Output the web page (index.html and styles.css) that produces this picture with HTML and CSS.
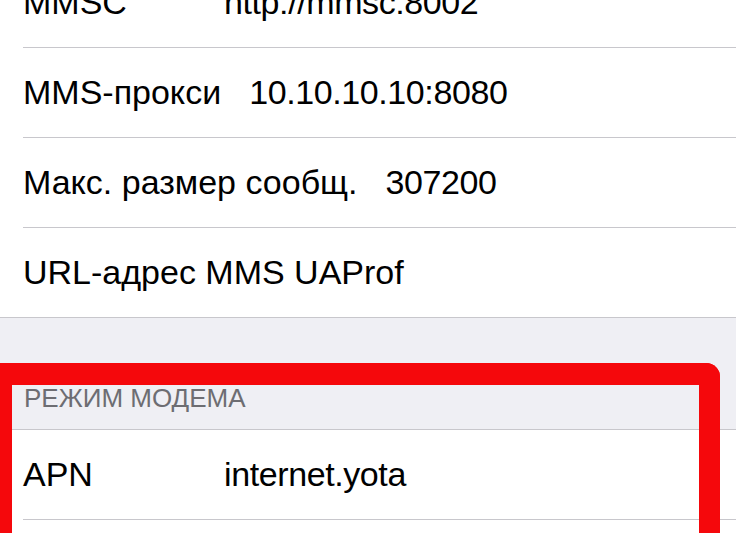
FILE: index.html
```html
<!DOCTYPE html>
<html lang="ru">
<head>
<meta charset="utf-8">
<title>Сотовая сеть передачи данных</title>
<link rel="stylesheet" href="styles.css">
</head>
<body>
<div class="screen">
  <div class="group group-first">
    <div class="cell"><div class="cell-inner"><span class="label">MMSC</span><span class="value">http://mmsc:8002</span></div></div>
    <div class="cell"><div class="cell-inner"><span class="label">MMS-прокси</span><span class="value">10.10.10.10:8080</span></div></div>
    <div class="cell"><div class="cell-inner"><span class="label">Макс. размер сообщ.</span><span class="value">307200</span></div></div>
    <div class="cell cell-last"><div class="cell-inner"><span class="label">URL-адрес MMS UAProf</span><span class="value"></span></div></div>
  </div>
  <div class="section-header">Режим модема</div>
  <div class="group">
    <div class="cell"><div class="cell-inner"><span class="label">APN</span><span class="value">internet.yota</span></div></div>
    <div class="cell"><div class="cell-inner"><span class="label"></span><span class="value"></span></div></div>
  </div>
  <div class="highlight"></div>
</div>
</body>
</html>
```
FILE: styles.css
```css
html, body {
  margin: 0;
  padding: 0;
}
body {
  background: #efeff4;
  font-family: "Liberation Sans", Arial, sans-serif;
  color: #000;
  overflow: hidden;
  width: 736px;
  height: 533px;
}
.screen {
  position: relative;
  width: 736px;
  height: 533px;
  overflow: hidden;
}
.group {
  background: #fff;
  border-top: 1px solid #c8c7cc;
  border-bottom: 1px solid #c8c7cc;
}
.group-first {
  margin-top: -43px;
}
.cell {
  padding-left: 23px;
}
.cell-inner {
  height: 89px;
  display: flex;
  align-items: center;
  gap: 28px;
  border-bottom: 1px solid #c8c7cc;
  font-size: 34px;
  white-space: nowrap;
}
.cell-last .cell-inner {
  border-bottom: none;
}
.label {
  min-width: 173px;
}
.value {
  letter-spacing: -0.4px;
}
.section-header {
  height: 111px;
  box-sizing: border-box;
  display: flex;
  align-items: flex-end;
  padding: 0 0 15px 24px;
  font-size: 26px;
  text-transform: uppercase;
  color: #6d6d72;
}
.highlight {
  position: absolute;
  left: -20px;
  top: 363px;
  width: 740px;
  height: 300px;
  box-sizing: border-box;
  border: solid #f5080c;
  border-width: 22px 21px 0 32px;
  border-top-right-radius: 14px;
}
```
